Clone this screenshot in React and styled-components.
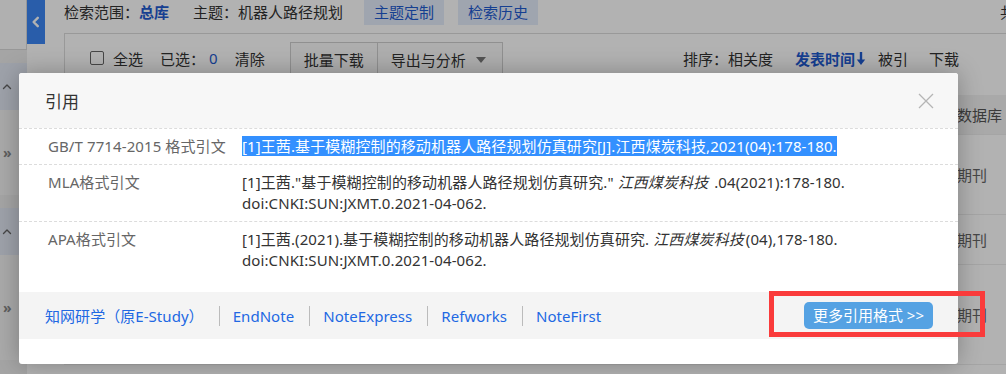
import React from 'react';
import styled, { createGlobalStyle } from 'styled-components';

const GlobalStyle = createGlobalStyle`
  html, body {
    margin: 0;
    padding: 0;
    background: #fff;
    font-family: "Noto Sans", "Noto Sans CJK SC", sans-serif;
  }
  * {
    box-sizing: border-box;
  }
`;

const Page = styled.div`
  position: relative;
  display: flex;
  width: 1006px;
  height: 374px;
  overflow: hidden;
  background: #fff;
  color: #333;
  font-size: 15px;
`;

const Sidebar = styled.div`
  width: 27px;
  flex-shrink: 0;
  display: flex;
  flex-direction: column;
  background: #ededed;
`;

const SideTop = styled.div`
  height: 50px;
  margin-bottom: 13px;
  background: #fcfcfc;
  border-right: 1px solid #d8d8d8;
  border-bottom: 1px solid #d8d8d8;
`;

const SideHead = styled.div`
  height: 47px;
  display: flex;
  align-items: center;
  padding-left: 2px;
  background: #e2e8f4;
  color: #777;
`;

const SideBody = styled.div`
  height: ${p => p.$h}px;
  margin-bottom: ${p => p.$gap || 0}px;
  display: flex;
  align-items: center;
  padding-left: 3px;
  background: #f4f4f4;
  color: #888;
  font-size: 14px;
  font-weight: bold;
  letter-spacing: -2px;
`;

const CollapseTab = styled.div`
  width: 18px;
  height: 44px;
  flex-shrink: 0;
  display: flex;
  align-items: center;
  justify-content: center;
  background: #3b86f4;
`;

const Main = styled.div`
  flex: 1;
  min-width: 0;
  padding-left: 19px;
  display: flex;
  flex-direction: column;
`;

const TopBar = styled.div`
  height: 33px;
  display: flex;
  align-items: flex-start;
  white-space: nowrap;
  overflow: hidden;
  line-height: 25px;
`;

const Crumb = styled.span`
  margin-right: ${p => p.$mr || 0}px;
  margin-left: ${p => p.$ml || 0}px;
`;

const Strong = styled.b`
  color: #1f5bd0;
  font-weight: bold;
`;

const Tag = styled.span`
  height: 25px;
  padding: 0 10px;
  margin-right: 14px;
  background: #e4ecfb;
  color: #1f5bd0;
`;

const Toolbar = styled.div`
  height: 52px;
  display: flex;
  align-items: center;
  padding: 0 47px 0 25px;
  border-top: 1px solid #dcdcdc;
  border-left: 1px solid #dcdcdc;
  white-space: nowrap;
`;

const Check = styled.span`
  width: 14px;
  height: 14px;
  border: 1px solid #666;
  border-radius: 2px;
  background: #fff;
  margin-right: 9px;
  margin-top: -3px;
`;

const ToolText = styled.span`
  margin-right: ${p => p.$mr || 0}px;
  margin-top: -3px;
  color: ${p => (p.$blue ? '#1f5bd0' : '#333')};
  font-weight: ${p => (p.$bold ? 'bold' : 'normal')};
  display: flex;
  align-items: center;
`;

const ToolButton = styled.span`
  height: 36px;
  display: flex;
  align-items: center;
  gap: 10px;
  padding: 0 ${p => p.$pr || 13}px 0 13px;
  border: 1px solid #cfcfcf;
  margin-left: ${p => (p.$joined ? '-1px' : '0')};
  background: #fafafa;
  color: #333;
`;

const Sort = styled.div`
  margin-left: auto;
  display: flex;
  align-items: center;
`;

const ResultTable = styled.div`
  margin-top: 10px;
  display: flex;
  flex-direction: column;
`;

const ResultRow = styled.div`
  height: ${p => p.$h}px;
  display: grid;
  grid-template-columns: 893px 1fr;
  align-items: center;
  background: ${p => (p.$head ? '#f3f3f3' : '#fff')};
  border-bottom: 1px solid #ececec;
  color: ${p => (p.$head ? '#555' : '#666')};
`;

const Overlay = styled.div`
  position: absolute;
  inset: 0;
  background: rgba(0, 0, 0, 0.3);
`;

const Modal = styled.div`
  position: absolute;
  left: 19px;
  top: 73px;
  width: 939px;
  background: #fff;
  border-radius: 3px;
  box-shadow: 0 0 24px rgba(0, 0, 0, 0.28);
  padding-bottom: 25px;
  overflow: hidden;
`;

const ModalHeader = styled.div`
  height: 55px;
  display: flex;
  align-items: center;
  justify-content: space-between;
  padding: 0 23px 0 26px;
  background: #f7f7f7;
`;

const ModalTitle = styled.h2`
  margin: 0;
  font-size: 17px;
  font-weight: normal;
  color: #333;
`;

const CloseIcon = styled.svg`
  width: 18px;
  height: 18px;
  margin-top: 1px;
`;

const CiteRow = styled.div`
  display: flex;
  padding: 7px 18px 7px 29px;
  border-top: 1px dashed #dcdcdc;
  line-height: 21px;
  letter-spacing: 0.1px;
`;

const CiteLabel = styled.div`
  width: 194px;
  flex-shrink: 0;
  color: #666;
`;

const CiteValue = styled.div`
  flex: 1;
  color: #333;
`;

const Selected = styled.span`
  background: #3390ff;
  color: #fff;
`;

const Journal = styled.i`
  font-style: italic;
  padding-right: 2px;
`;

const Footer = styled.div`
  margin-top: 14px;
  height: 47px;
  display: flex;
  align-items: center;
  padding: 0 25px 0 26px;
  background: #f4f4f4;
`;

const ToolLink = styled.a`
  color: #2168e3;
  text-decoration: none;
  letter-spacing: 0.05px;
`;

const Divider = styled.span`
  width: 1px;
  height: 20px;
  background: #bbb;
  margin: 0 13px 0 15px;
`;

const MoreButton = styled.button`
  margin-left: auto;
  height: 27px;
  padding: 0 9px;
  border: none;
  border-radius: 5px;
  background: #55a2e3;
  color: #fff;
  font-family: inherit;
  font-size: 15px;
  line-height: 27px;
  cursor: pointer;
`;

const Highlight = styled.div`
  position: absolute;
  left: 769px;
  top: 291px;
  width: 216px;
  height: 46px;
  border: 5px solid #fa3b3b;
`;

const Chevron = ({ dir, color, size = 10 }) => (
  <svg width={size} height={size} viewBox="0 0 10 10">
    <path
      d={dir === 'left' ? 'M6.5 1.5 L3 5 L6.5 8.5' : 'M1.5 6.5 L5 3 L8.5 6.5'}
      fill="none"
      stroke={color}
      strokeWidth={dir === 'left' ? 2 : 1.4}
      strokeLinecap="round"
      strokeLinejoin="round"
    />
  </svg>
);

const DownArrow = () => (
  <svg width="10" height="15" viewBox="0 0 10 15" style={{ marginLeft: 1 }}>
    <path d="M5 1 V10" stroke="#1f5bd0" strokeWidth="2.4" />
    <path d="M0.8 8.5 L9.2 8.5 L5 14 Z" fill="#1f5bd0" />
  </svg>
);

const Caret = () => (
  <svg width="10" height="6" viewBox="0 0 10 6">
    <path d="M0 0 L10 0 L5 6 Z" fill="#777" />
  </svg>
);

const links = ['知网研学（原E-Study）', 'EndNote', 'NoteExpress', 'Refworks', 'NoteFirst'];

const results = [
  { h: 80, db: '期刊' },
  { h: 50, db: '期刊' },
  { h: 100, db: '期刊' },
];

export default function App() {
  return (
    <>
      <GlobalStyle />
      <Page>
        <Sidebar>
          <SideTop />
          <SideHead><Chevron dir="up" color="#666" /></SideHead>
          <SideBody $h={85} $gap={13}>»</SideBody>
          <SideHead><Chevron dir="up" color="#666" /></SideHead>
          <SideBody $h={105}>»</SideBody>
        </Sidebar>
        <CollapseTab><Chevron dir="left" color="#fff" size={12} /></CollapseTab>
        <Main>
          <TopBar>
            <Crumb $mr={24}>检索范围：<Strong>总库</Strong></Crumb>
            <Crumb $mr={21}>主题：机器人路径规划</Crumb>
            <Tag>主题定制</Tag>
            <Tag>检索历史</Tag>
            <Crumb $ml={448}>共找到 1,024 条结果</Crumb>
          </TopBar>
          <Toolbar>
            <Check />
            <ToolText $mr={17}>全选</ToolText>
            <ToolText $mr={4}>已选：</ToolText>
            <ToolText $mr={17} $blue>0</ToolText>
            <ToolText $mr={25}>清除</ToolText>
            <ToolButton>批量下载</ToolButton>
            <ToolButton $joined $pr={16}>导出与分析<Caret /></ToolButton>
            <Sort>
              <ToolText>排序：</ToolText>
              <ToolText $mr={22}>相关度</ToolText>
              <ToolText $mr={12} $blue $bold>发表时间<DownArrow /></ToolText>
              <ToolText $mr={21}>被引</ToolText>
              <ToolText>下载</ToolText>
            </Sort>
          </Toolbar>
          <ResultTable>
            <ResultRow $h={40} $head>
              <span>题名</span>
              <span>数据库</span>
            </ResultRow>
            {results.map((r, i) => (
              <ResultRow key={i} $h={r.h}>
                <span />
                <span>{r.db}</span>
              </ResultRow>
            ))}
          </ResultTable>
        </Main>

        <Overlay />

        <Modal>
          <ModalHeader>
            <ModalTitle>引用</ModalTitle>
            <CloseIcon viewBox="0 0 18 18">
              <path d="M2 2 L16 16 M16 2 L2 16" stroke="#b5b5b5" strokeWidth="1.3" fill="none" />
            </CloseIcon>
          </ModalHeader>

          <CiteRow>
            <CiteLabel>GB/T 7714-2015 格式引文</CiteLabel>
            <CiteValue>
              <Selected>[1]王茜.基于模糊控制的移动机器人路径规划仿真研究[J].江西煤炭科技,2021(04):178-180.</Selected>
            </CiteValue>
          </CiteRow>
          <CiteRow>
            <CiteLabel>MLA格式引文</CiteLabel>
            <CiteValue>
              [1]王茜."基于模糊控制的移动机器人路径规划仿真研究." <Journal>江西煤炭科技</Journal> .04(2021):178-180. doi:CNKI:SUN:JXMT.0.2021-04-062.
            </CiteValue>
          </CiteRow>
          <CiteRow>
            <CiteLabel>APA格式引文</CiteLabel>
            <CiteValue>
              [1]王茜.(2021).基于模糊控制的移动机器人路径规划仿真研究. <Journal>江西煤炭科技</Journal>(04),178-180. doi:CNKI:SUN:JXMT.0.2021-04-062.
            </CiteValue>
          </CiteRow>

          <Footer>
            {links.map((l, i) => (
              <React.Fragment key={l}>
                {i > 0 && <Divider />}
                <ToolLink href="#">{l}</ToolLink>
              </React.Fragment>
            ))}
            <MoreButton>更多引用格式 &gt;&gt;</MoreButton>
          </Footer>
        </Modal>

        <Highlight />
      </Page>
    </>
  );
}
